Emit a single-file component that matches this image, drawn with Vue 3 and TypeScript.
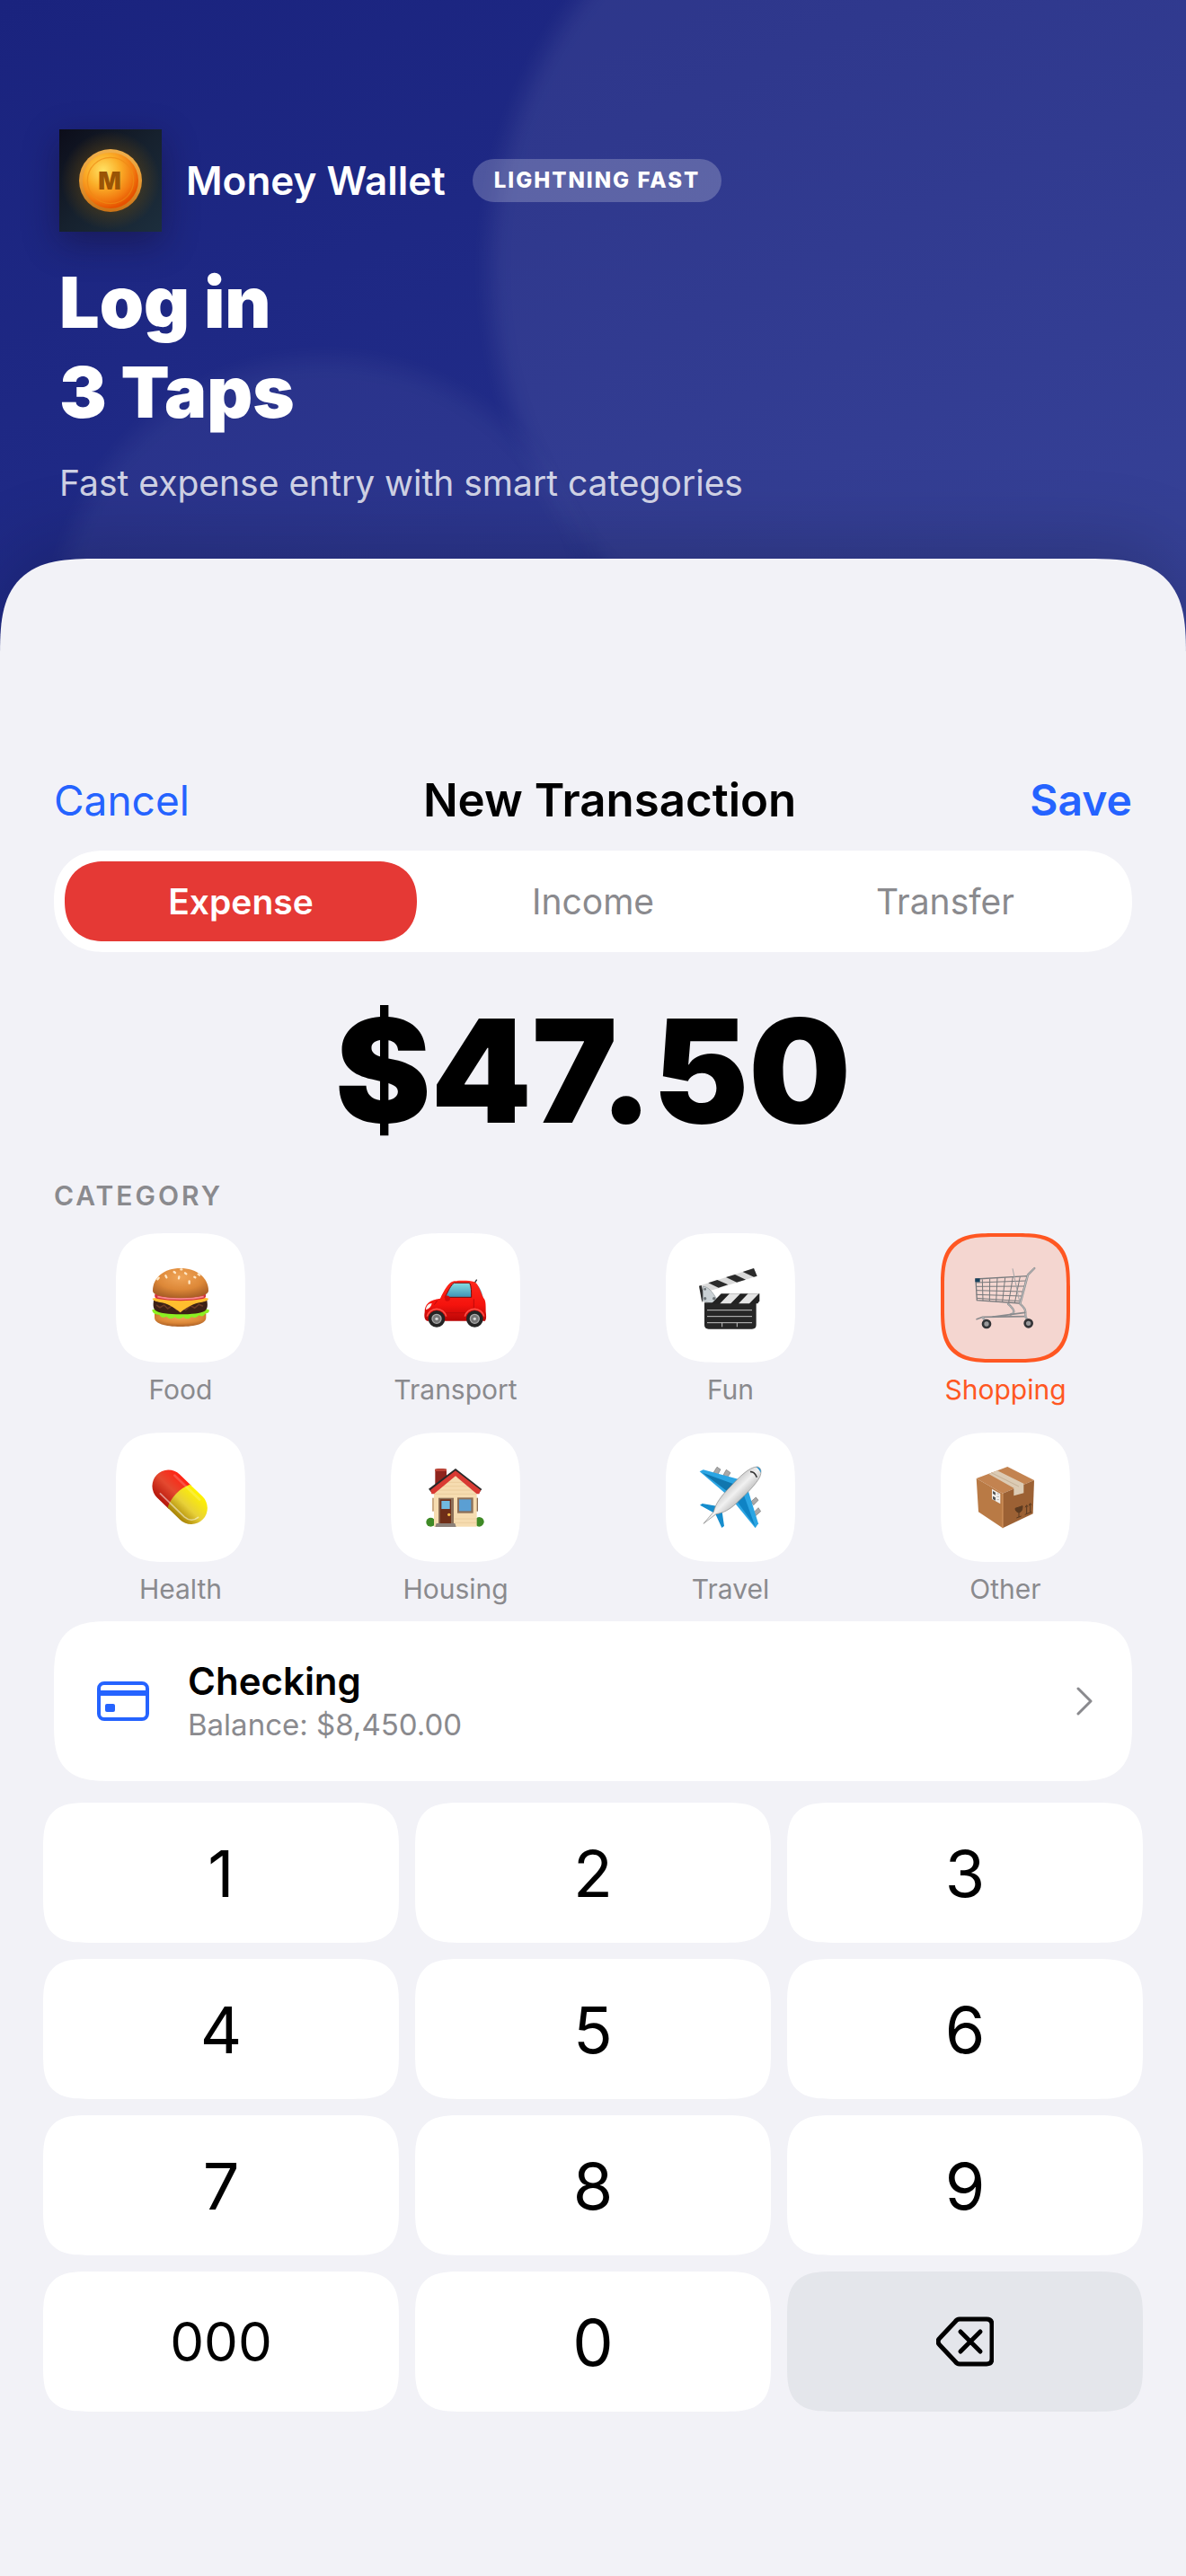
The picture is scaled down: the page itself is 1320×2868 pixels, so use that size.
<script setup lang="ts">
import { computed, ref } from 'vue'

type Category = { id: string; label: string }

const kinds = ['Expense', 'Income', 'Transfer']
const categories: Category[] = [
  { id: 'food', label: 'Food' },
  { id: 'transport', label: 'Transport' },
  { id: 'fun', label: 'Fun' },
  { id: 'shopping', label: 'Shopping' },
  { id: 'health', label: 'Health' },
  { id: 'housing', label: 'Housing' },
  { id: 'travel', label: 'Travel' },
  { id: 'other', label: 'Other' },
]
const keys = ['1', '2', '3', '4', '5', '6', '7', '8', '9', '000', '0']

const kind = ref('Expense')
const category = ref('shopping')
const cents = ref('4750')

const amount = computed(() =>
  (Number(cents.value || '0') / 100).toLocaleString('en-US', { style: 'currency', currency: 'USD' }),
)

function press(key: string) {
  if (cents.value.length + key.length <= 9) cents.value += key
}

function erase() {
  cents.value = cents.value.slice(0, -1)
}
</script>

<template>
  <main class="page">
    <header class="hero">
      <div class="brand">
        <svg class="logo" viewBox="48 42 342 342" aria-hidden="true">
          <defs>
            <linearGradient id="logoBg" x1="0" y1="0" x2="1" y2="1">
              <stop offset="0" stop-color="#0c0d1a" />
              <stop offset=".5" stop-color="#16212e" />
              <stop offset="1" stop-color="#1c2e3d" />
            </linearGradient>
            <radialGradient id="logoGlow">
              <stop offset=".55" stop-color="#6b4a10" stop-opacity=".45" />
              <stop offset="1" stop-color="#6b4a10" stop-opacity="0" />
            </radialGradient>
            <linearGradient id="coinRim" x1="0" y1="0" x2="0" y2="1">
              <stop offset="0" stop-color="#f0b04c" />
              <stop offset=".5" stop-color="#e79a34" />
              <stop offset="1" stop-color="#c97216" />
            </linearGradient>
            <radialGradient id="coinFace" cx=".37" cy=".32" r=".75">
              <stop offset="0" stop-color="#ffe264" />
              <stop offset=".4" stop-color="#fbae28" />
              <stop offset=".72" stop-color="#f27a10" />
              <stop offset=".92" stop-color="#e65100" />
            </radialGradient>
          </defs>
          <rect x="48" y="42" width="342" height="342" fill="url(#logoBg)" />
          <circle cx="219" cy="213" r="165" fill="url(#logoGlow)" />
          <circle cx="219" cy="213" r="105" fill="url(#coinRim)" />
          <circle cx="219" cy="213" r="93" fill="url(#coinFace)" />
          <circle cx="219" cy="213" r="77" fill="none" stroke="#ee8a14" stroke-width="4" opacity=".7" />
          <text x="216" y="242" text-anchor="middle" class="coin-letter">M</text>
        </svg>
        <span class="brand-name">Money Wallet</span>
        <span class="badge">LIGHTNING FAST</span>
      </div>
      <h1 class="headline">Log in<br />3 Taps</h1>
      <p class="tagline">Fast expense entry with smart categories</p>
    </header>

    <section class="sheet">
      <nav class="bar">
        <button type="button" class="link">Cancel</button>
        <h2 class="title">New Transaction</h2>
        <button type="button" class="link save">Save</button>
      </nav>

      <div class="segments">
        <button
          v-for="k in kinds"
          :key="k"
          type="button"
          class="segment"
          :class="{ active: kind === k }"
          :aria-pressed="kind === k"
          @click="kind = k"
        >
          {{ k }}
        </button>
      </div>

      <output class="amount">{{ amount }}</output>

      <h3 class="section-label">CATEGORY</h3>
      <div class="categories">
        <button
          v-for="c in categories"
          :key="c.id"
          type="button"
          class="category"
          :class="{ chosen: category === c.id }"
          :aria-pressed="category === c.id"
          @click="category = c.id"
        >
          <span class="tile">
            <svg v-if="c.id === 'food'" class="glyph" viewBox="195 180 216 216" aria-hidden="true">
              <defs>
                <radialGradient id="bun" cx=".5" cy=".3" r=".7">
                  <stop offset="0" stop-color="#f0a558" />
                  <stop offset=".6" stop-color="#dd8838" />
                  <stop offset="1" stop-color="#ab6026" />
                </radialGradient>
              </defs>
              <path d="M216 340h172v14c0 20-34 30-86 30s-86-10-86-30z" fill="url(#bun)" />
              <path d="M208 328c20-10 168-10 190 0 2 8-4 12-12 12-4 10-14 12-22 6-8 10-18 10-24 4-8 10-20 10-28 2-8 8-20 8-28 0-10 8-22 6-28-2-8 6-20 4-24-6-10 2-24-4-24-16z" fill="#8cf022" />
              <path d="M213 296h178c4 22 0 30-8 36-20 14-144 16-164-2-8-8-8-18-6-34z" fill="#3c2116" />
              <path d="M222 312l12 8 14-8 12 12 16-10 14 14 16-8 14 8 16-14 14 8 14-12 14 6" fill="none" stroke="#6a3a25" stroke-width="5" />
              <path d="M209 290c30-10 160-10 187 0-2 8-12 10-26 13-22 4-42 12-68 34-26-22-44-30-66-34-14-3-25-5-27-13z" fill="#ffbe2e" />
              <path d="M217 276h170c2 10-2 14-14 16-40 8-100 8-142 0-12-2-16-6-14-16z" fill="#d8323f" />
              <path d="M226 284c40 10 112 10 154 0" fill="none" stroke="#f58a8a" stroke-width="5" />
              <path d="M210 264c0-44 38-75 92-75s94 31 94 75c0 14-30 24-93 24s-93-10-93-24z" fill="url(#bun)" />
              <g stroke="#ffe6c4" stroke-width="7" stroke-linecap="round">
                <path d="M281 201l4 3M253 214l3 6M226 226l4-5M298 217l-1 6M318 205l4 3M349 218l3 2M332 232v7M304 193h3M362 209l4 3" />
              </g>
            </svg>

            <svg v-else-if="c.id === 'transport'" class="glyph" viewBox="1113 180 216 216" aria-hidden="true">
              <defs>
                <linearGradient id="glass" x1="0" y1="0" x2="0" y2="1">
                  <stop offset="0" stop-color="#86dde0" />
                  <stop offset="1" stop-color="#3f93b5" />
                </linearGradient>
                <linearGradient id="carBody" x1="0" y1="0" x2="0" y2="1">
                  <stop offset="0" stop-color="#ff2a1c" />
                  <stop offset=".6" stop-color="#f5130d" />
                  <stop offset="1" stop-color="#b80606" />
                </linearGradient>
              </defs>
              <path d="M1285 238l7-11" stroke="#333" stroke-width="4" />
              <path d="M1170 292c12-24 24-48 40-58l76 4c18 14 24 34 28 54z" fill="#5cb5c9" />
              <path d="M1118 336c0-28 16-42 52-46 14-28 28-56 46-58 30-3 54-1 66 2 16 6 22 32 32 54 8 8 8 20 8 46 2 16 2 24-2 31h-194c-10-4-10-18-8-29z" fill="url(#carBody)" />
              <path d="M1186 286c10-20 20-42 30-48h52c6 12 6 30 6 48z" fill="url(#glass)" stroke="#7a0a08" stroke-width="3" />
              <path d="M1184 285c2-5 10-5 14-3 6 3 6 12 2 16-8 3-16 0-14-6z" fill="#d40a0a" />
              <path d="M1122 328c0-12 8-22 20-22-2 12-10 18-20 22z" fill="#f6f1ee" />
              <path d="M1160 297l-10 14M1186 338h70M1282 292v36" stroke="#bd0a0a" stroke-width="3" fill="none" />
              <path d="M1126 350a33 33 0 0 1 64 0M1252 350a33 33 0 0 1 64 0" fill="none" stroke="#ff5148" stroke-width="5" />
              <g fill="#242424">
                <circle cx="1158" cy="358" r="28" />
                <circle cx="1285" cy="358" r="28" />
              </g>
              <g fill="#777" stroke="#aaa" stroke-width="4">
                <circle cx="1158" cy="358" r="15" />
                <circle cx="1285" cy="358" r="15" />
              </g>
              <g fill="#d8d8d8">
                <circle cx="1158" cy="358" r="5" />
                <circle cx="1285" cy="358" r="5" />
              </g>
            </svg>

            <svg v-else-if="c.id === 'fun'" class="glyph" viewBox="171 180 216 216" aria-hidden="true">
              <path d="M174 248L357 189l11 26-182 57z" fill="#dadada" />
              <g fill="#2b2b2b">
                <path d="M205 238l30-10 36 16-32 10z" />
                <path d="M264 219l30-9 36 17-30 9z" />
                <path d="M320 201l37-12 11 26-11 3z" />
                <path d="M174 248l8-2 8 34-6 24z" />
              </g>
              <path d="M187 250c18 0 34 20 48 46l-20 11-28-9z" fill="#c9d0d4" stroke="#8b9296" stroke-width="2" />
              <path d="M192 304h173v74q0 14-14 14H206q-14 0-14-14z" fill="#262626" />
              <path d="M216 307l32-33h128v24l-6 9z" fill="#222" />
              <path d="M276 274h36l-32 33h-36zM338 274h36l-32 33h-36z" fill="#e4e4e4" />
              <path d="M201 329h150M201 350h150M201 371h150M251 371v14M301 371v14" stroke="#c2c2c2" stroke-width="3" />
              <g fill="#6d7478">
                <circle cx="194" cy="259" r="4" />
                <circle cx="194" cy="290" r="5" />
                <circle cx="224" cy="290" r="5" />
              </g>
            </svg>

            <svg v-else-if="c.id === 'shopping'" class="glyph" viewBox="1089 180 216 216" aria-hidden="true">
              <g fill="none" stroke="#77797c" stroke-width="3">
                <path d="M1098 225l172-10-25 91-143-10z" stroke-width="4" />
                <path d="M1099 237l168-6M1099 250l163-1M1100 263l158 4M1100 277l154 5M1101 289l149 10" />
                <path d="M1120 226l2 72M1145 224l-1 76M1170 222l-4 79M1196 220l-9 82M1222 218l-14 86M1246 217l-18 88" />
                <path d="M1221 190l24 115" stroke="#a5a6a8" />
              </g>
              <g fill="none" stroke-linecap="round" stroke-linejoin="round">
                <path d="M1294 189l-22 22-26 97c20 18 18 22 18 40M1206 308c24 22 24 30 8 36" stroke="#8f9193" stroke-width="7" />
                <path d="M1294 189l-22 22-26 97c20 18 18 22 18 40M1206 308c24 22 24 30 8 36" stroke="#d5d3d3" stroke-width="2" />
                <path d="M1101 359l20-7 142-2M1150 352l112-15" stroke="#898a8d" stroke-width="5" />
                <path d="M1122 354l12 18M1264 350l10 20" stroke="#a6a6a8" stroke-width="8" />
              </g>
              <rect x="1096" y="223" width="16" height="12" fill="#17415c" />
              <g fill="#99999b" stroke="#333437" stroke-width="8">
                <circle cx="1134" cy="375" r="12" />
                <circle cx="1274" cy="373" r="12" />
              </g>
            </svg>

            <svg v-else-if="c.id === 'health'" class="glyph" viewBox="195 186 216 216" aria-hidden="true">
              <defs>
                <linearGradient id="pillRed" x1="0" y1="0" x2="0" y2="1">
                  <stop offset="0" stop-color="#ff2414" />
                  <stop offset=".5" stop-color="#e4492f" />
                  <stop offset="1" stop-color="#b5160b" />
                </linearGradient>
                <linearGradient id="pillYellow" x1="0" y1="0" x2="0" y2="1">
                  <stop offset="0" stop-color="#fff200" />
                  <stop offset=".55" stop-color="#e8d038" />
                  <stop offset="1" stop-color="#a88204" />
                </linearGradient>
              </defs>
              <g transform="rotate(44 299 292)">
                <path d="M301 238h-53a54 54 0 0 0 0 108h53z" fill="url(#pillRed)" />
                <path d="M296 238h58a54 54 0 0 1 0 108h-58c-16-34-16-74 0-108z" fill="url(#pillYellow)" />
                <path d="M246 329h112c20-1 32-14 34-31" fill="none" stroke="#fff" stroke-width="5" stroke-linecap="round" opacity=".5" />
                <path d="M238 252h116" fill="none" stroke="#fff" stroke-width="8" stroke-linecap="round" opacity=".18" />
              </g>
            </svg>

            <svg v-else-if="c.id === 'housing'" class="glyph" viewBox="1113 186 216 216" aria-hidden="true">
              <g fill="#3f8a26">
                <circle cx="1138" cy="377" r="15" />
                <circle cx="1300" cy="376" r="16" />
              </g>
              <path d="M1143 296h8v45h-8z" fill="#cdac85" />
              <path d="M1289 296h7v45h-7z" fill="#8b6c51" />
              <path d="M1153 200q18-4 38 0v36l-38 28z" fill="#8f241d" />
              <path d="M1153 200q18-4 38 0v7h-38z" fill="#bd4437" />
              <path d="M1149 270l72-52 71 52v122h-143z" fill="#f6dcb0" />
              <path d="M1192 244h58M1178 257h86M1164 270h114M1150 283h140M1217 366h73M1217 379h73" stroke="#e5c795" stroke-width="2" />
              <path d="M1221 198l88 69-7 9-81-62-82 62-8-10z" fill="#2a2828" />
              <path d="M1137 270l84-65 84 65-5 13h-8l-71-60-72 60h-8z" fill="#d93a33" />
              <path d="M1164 296h51v90h-51z" fill="#8d7058" />
              <path d="M1169 301h37v82h-37z" fill="#6f2e18" />
              <path d="M1174 306h28v27h-28z" fill="#71b9df" />
              <circle cx="1199" cy="352" r="5" fill="#ffc44d" />
              <path d="M1157 381h62l4 12h-70z" fill="#8c8179" />
              <path d="M1227 295h53v52h-53z" fill="#8d7058" />
              <path d="M1233 301h40v39h-40z" fill="#5b9fd3" />
            </svg>

            <svg v-else-if="c.id === 'travel'" class="glyph" viewBox="171 186 216 216" aria-hidden="true">
              <defs>
                <linearGradient id="fuselage" x1="0" y1="0" x2="1" y2="1">
                  <stop offset=".25" stop-color="#9c9c9c" />
                  <stop offset=".5" stop-color="#f1f1f1" />
                  <stop offset=".8" stop-color="#7d7d7d" />
                </linearGradient>
              </defs>
              <g fill="#a9a9a9" stroke="#777" stroke-width="2">
                <path d="M222 212l12-19 12 8-10 18zM255 220l10-18 14 10-10 16zM348 308l16-14 8 10-16 16zM357 344l15-15 8 12-16 14z" />
              </g>
              <path d="M176 208l12-6 122 33-48 46z" fill="#2ba5e3" />
              <path d="M186 212l82 62 22-24z" fill="#1176ae" />
              <path d="M335 262l37 120-10 15-70-86z" fill="#2ba5e3" />
              <path d="M300 306l22-24 40 110z" fill="#0f83c4" />
              <path d="M177 320l8-5 52 9-14 22zM229 350l22-8 7 48-8 6z" fill="#168dcd" />
              <path d="M189 382l34-40c6-26 24-52 56-84 28-30 62-66 90-66 14 2 14 20 8 34-12 24-44 56-78 88-24 22-44 32-68 36z" fill="url(#fuselage)" stroke="#858585" stroke-width="2" />
              <path d="M364 193c12 0 18 8 16 19-4-8-8-14-16-19z" fill="#198fce" />
              <path d="M345 209c8-2 18 6 22 18" fill="none" stroke="#333" stroke-width="5" />
            </svg>

            <svg v-else class="glyph" viewBox="1089 186 216 216" aria-hidden="true">
              <path d="M1100 231l104-39 89 45-105 44z" fill="#c38350" />
              <path d="M1100 231l88 50v116l-81-54z" fill="#b97a45" />
              <path d="M1188 281l105-44-4 112-101 48z" fill="#9c6134" />
              <path d="M1141 216l29-11 88 43v32l-33 9v-26z" fill="#dccbb4" />
              <path d="M1150 212l92 46" stroke="#c6b196" stroke-width="3" />
              <path d="M1152 266l28 16v34l-28-16z" fill="#f2efeb" />
              <path d="M1155 273l9 5v9l-9-5zM1155 290l9 5v10l-9-5z" fill="#555" />
              <path d="M1168 282h8M1168 292h8M1168 302h8" stroke="#999" stroke-width="2" />
              <path d="M1230 331l24-8c0 14-4 20-12 22-8-2-12-6-12-14zM1242 342v18M1234 363l16-6" fill="#5b3a20" stroke="#5b3a20" stroke-width="3" />
              <path d="M1268 322v26M1280 317v26M1263 328l5-8 4 6M1275 322l5-8 4 6M1262 352l22-9" fill="none" stroke="#5b3a20" stroke-width="3" />
              <path d="M1188 281v116" stroke="#d99b62" stroke-width="3" />
            </svg>
          </span>
          <span class="category-name">{{ c.label }}</span>
        </button>
      </div>

      <button type="button" class="account">
        <svg class="card-icon" viewBox="0 0 58 44" aria-hidden="true">
          <rect x="2" y="2" width="54" height="40" rx="6" fill="none" stroke="#2563ff" stroke-width="4" />
          <path d="M2 10h54v6H2z" fill="#2563ff" />
          <rect x="9" y="25" width="11" height="9" rx="2" fill="#2563ff" />
        </svg>
        <span class="account-text">
          <span class="account-name">Checking</span>
          <span class="account-balance">Balance: $8,450.00</span>
        </span>
        <svg class="chevron" viewBox="0 0 18 32" aria-hidden="true">
          <path d="M2 2l14 14L2 30" fill="none" stroke="#8a8a8e" stroke-width="3" stroke-linecap="round" stroke-linejoin="round" />
        </svg>
      </button>

      <div class="keypad">
        <button
          v-for="key in keys"
          :key="key"
          type="button"
          class="key"
          :class="{ triple: key === '000' }"
          @click="press(key)"
        >
          {{ key }}
        </button>
        <button type="button" class="key erase" aria-label="Delete" @click="erase">
          <svg class="erase-icon" viewBox="0 0 64 56" aria-hidden="true">
            <path
              d="M26 3h30q6 0 6 6v38q0 6-6 6H26q-3 0-5-3L4 32q-4-4 0-8L21 6q2-3 5-3z"
              fill="none"
              stroke="#000"
              stroke-width="5"
              stroke-linejoin="round"
            />
            <path d="M27 17l22 22M49 17L27 39" stroke="#000" stroke-width="5" stroke-linecap="round" />
          </svg>
        </button>
      </div>
    </section>
  </main>
</template>

<style>
body {
  margin: 0;
  background: #f2f2f7;
}
</style>

<style scoped>
.page {
  min-height: 100vh;
  display: flex;
  flex-direction: column;
  overflow: hidden;
  position: relative;
  font-family: Inter, 'Noto Sans', sans-serif;
  color: #000;
  background: linear-gradient(155deg, #1a237e 0, #283593 1500px);
}

/* Two soft translucent discs behind the header */
.page::before,
.page::after {
  content: '';
  position: absolute;
  border-radius: 50%;
  filter: blur(12px);
}

.page::before {
  width: 1000px;
  height: 1000px;
  left: 546px;
  top: -200px;
  background: rgba(255, 255, 255, 0.08);
}

.page::after {
  width: 600px;
  height: 600px;
  left: 62px;
  top: 400px;
  background: rgba(255, 255, 255, 0.05);
}

.hero {
  position: relative;
  z-index: 1;
  padding: 144px 66px 60px;
  color: #fff;
}

.brand {
  display: flex;
  align-items: center;
}

.logo {
  width: 114px;
  height: 114px;
  box-shadow: 0 12px 36px rgba(20, 10, 30, 0.4);
}

.coin-letter {
  font-size: 80px;
  font-weight: 900;
  fill: #9a5405;
}

.brand-name {
  margin: 0 30px 0 27px;
  font-size: 44px;
  font-weight: 600;
  line-height: 52px;
}

.badge {
  padding: 8px 24px;
  border-radius: 24px;
  background: rgba(255, 255, 255, 0.22);
  font-size: 24px;
  font-weight: 800;
  line-height: 32px;
  letter-spacing: 2px;
}

.headline {
  margin: 28px 0;
  font-size: 79px;
  font-weight: 900;
  line-height: 100px;
}

.tagline {
  margin: 0;
  font-size: 39px;
  line-height: 48px;
  color: rgba(255, 255, 255, 0.8);
}

.sheet {
  flex: 1;
  position: relative;
  z-index: 1;
  padding: 238px 60px 60px;
  border-radius: 76px 76px 0 0;
  background: #f2f2f7;
  box-shadow: 0 -12px 90px rgba(0, 0, 0, 0.2);
}

.bar {
  display: flex;
  align-items: center;
  justify-content: space-between;
}

button {
  margin: 0;
  padding: 0;
  border: 0;
  background: none;
  font-family: inherit;
  color: inherit;
  cursor: pointer;
}

.link {
  font-size: 46px;
  line-height: 62px;
  color: #2563ff;
}

.save {
  font-size: 48px;
  font-weight: 600;
}

.title {
  margin: 0;
  font-size: 51px;
  font-weight: 600;
  line-height: 62px;
}

.segments {
  display: grid;
  grid-template-columns: repeat(3, 1fr);
  margin-top: 25px;
  padding: 12px;
  border-radius: 60px;
  background: #fff;
}

.segment {
  height: 89px;
  border-radius: 60px;
  font-size: 39px;
  color: #8a8a8e;
}

.segment.active {
  background: #e53935;
  color: #fff;
  font-weight: 600;
}

.amount {
  display: block;
  margin: 36px 0 25px;
  text-align: center;
  font-size: 160px;
  font-weight: 900;
  line-height: 192px;
}

.section-label {
  margin: 0 0 24px;
  font-size: 30px;
  font-weight: 600;
  line-height: 36px;
  letter-spacing: 3px;
  color: #8a8a8e;
}

.categories {
  display: grid;
  grid-template-columns: repeat(4, 1fr);
  gap: 30px 24px;
}

.category {
  display: flex;
  flex-direction: column;
  align-items: center;
  gap: 12px;
  color: #8a8a8e;
}

.tile {
  display: flex;
  align-items: center;
  justify-content: center;
  width: 144px;
  height: 144px;
  border-radius: 44px;
  background: #fff;
}

.glyph {
  width: 72px;
  height: 72px;
}

.category-name {
  font-size: 30px;
  line-height: 36px;
}

.category.chosen {
  color: #ff5722;
}

.chosen .tile {
  box-sizing: border-box;
  border: 4px solid #ff5722;
  background: #f4d6d0;
}

.account {
  display: flex;
  align-items: center;
  width: 100%;
  height: 178px;
  margin-top: 18px;
  padding: 0 44px 0 48px;
  border-radius: 46px;
  background: #fff;
  text-align: left;
}

.card-icon {
  width: 58px;
  height: 44px;
}

.account-text {
  display: flex;
  flex: 1;
  flex-direction: column;
  margin-left: 43px;
}

.account-name {
  font-size: 42px;
  font-weight: 600;
  line-height: 52px;
}

.account-balance {
  font-size: 33px;
  line-height: 44px;
  color: #8a8a8e;
}

.chevron {
  width: 18px;
  height: 32px;
}

.keypad {
  display: grid;
  grid-template-columns: repeat(3, 1fr);
  gap: 18px;
  margin: 24px -12px 0;
}

.key {
  display: flex;
  align-items: center;
  justify-content: center;
  height: 156px;
  border-radius: 36px;
  background: #fff;
  font-size: 72px;
}

.triple {
  font-size: 60px;
}

.erase {
  background: #e4e6eb;
}

.erase-icon {
  width: 64px;
  height: 56px;
}

/* Continuous corners where the engine can draw them */
@supports (corner-shape: superellipse(1.6)) {
  .sheet,
  .tile,
  .account,
  .key {
    corner-shape: superellipse(1.6);
  }

  .segments,
  .segment {
    corner-shape: superellipse(1.2);
  }

  .sheet {
    border-radius: 110px 110px 0 0;
  }

  .tile {
    border-radius: 60px;
  }

  .account {
    border-radius: 66px;
  }

  .key {
    border-radius: 52px;
  }
}
</style>
